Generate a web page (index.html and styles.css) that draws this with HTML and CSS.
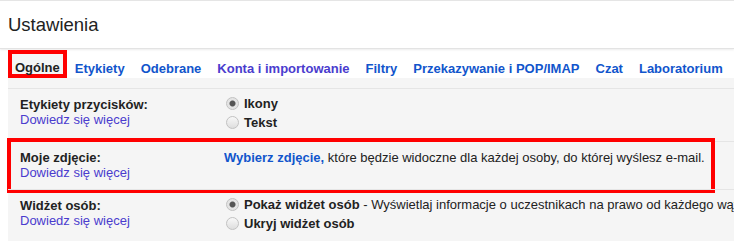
FILE: index.html
```html
<!DOCTYPE html>
<html>

<head>
    <title>Ustawienia</title>
    <link rel="stylesheet" href="styles.css">
</head>

<body>
    <div class="header">
        <h1>Ustawienia</h1>
    </div>

    <div class="tabs">
        <a class="tab selected">Ogólne</a>
        <a class="tab">Etykiety</a>
        <a class="tab">Odebrane</a>
        <a class="tab visited">Konta i importowanie</a>
        <a class="tab">Filtry</a>
        <a class="tab">Przekazywanie i POP/IMAP</a>
        <a class="tab">Czat</a>
        <a class="tab">Laboratorium</a>
    </div>

    <div class="panel">
        <div class="row">
            <div class="label">
                <b>Etykiety przycisków:</b><br>
                <a class="more">Dowiedz się więcej</a>
            </div>
            <div class="value options">
                <label class="option"><input type="radio" name="buttons" checked><b>Ikony</b></label>
                <label class="option"><input type="radio" name="buttons"><b>Tekst</b></label>
            </div>
        </div>

        <div class="row marked">
            <div class="label">
                <b>Moje zdjęcie:</b><br>
                <a class="more">Dowiedz się więcej</a>
            </div>
            <div class="value">
                <a class="action">Wybierz zdjęcie,</a> które będzie widoczne dla każdej osoby, do której wyślesz e-mail.
            </div>
        </div>

        <div class="row">
            <div class="label">
                <b>Widżet osób:</b><br>
                <a class="more">Dowiedz się więcej</a>
            </div>
            <div class="value options">
                <label class="option"><input type="radio" name="people" checked><b>Pokaż widżet osób</b>&nbsp;- Wyświetlaj informacje o uczestnikach na prawo od każdego wątku.</label>
                <label class="option"><input type="radio" name="people"><b>Ukryj widżet osób</b></label>
            </div>
        </div>
    </div>
</body>
</html>
```

FILE: styles.css
```css
body {
    margin: 0;
    font-family: "Liberation Sans", Arial, sans-serif;
    font-size: 13px;
    color: #222;
    background-color: #fff;
    overflow: hidden;
}

.header {
    border-top: 1px solid #e5e5e5;
    border-bottom: 1px solid #e3e3e3;
    box-shadow: 0 1px 2px rgba(0, 0, 0, 0.08);
}

h1 {
    margin: 0;
    padding-left: 8px;
    font-size: 18.5px;
    font-weight: normal;
    line-height: 47px;
    color: #222;
}

.tabs {
    display: flex;
    margin-top: 1px;
    padding-left: 8px;
    white-space: nowrap;
}

.tab {
    padding: 9px 8px 0;
    line-height: 19px;
    font-weight: bold;
    color: #15c;
}

.tab.visited {
    color: #4a3cce;
}

.tab.selected {
    padding: 7px 3px 0;
    line-height: 13px;
    border: 4px solid red;
    color: #222;
    background-color: #f5f5f5;
}

.panel {
    margin-left: 8px;
    padding-top: 10px;
    background-color: #f5f5f5;
}

.row {
    position: relative;
    display: grid;
    grid-template-columns: 204px 1fr;
    padding: 8px 0 9px 12px;
    border-top: 1px solid #e5e5e5;
    line-height: 15px;
    white-space: nowrap;
}

/* red annotation frame */
.row.marked::after {
    content: "";
    position: absolute;
    left: -1px;
    top: -4px;
    right: 19px;
    bottom: -4px;
    border: 4px solid red;
}

.more {
    color: #4a3cce;
}

.value {
    overflow: hidden;
}

.options {
    margin-top: -3px;
}

.option {
    display: flex;
    align-items: center;
    height: 19px;
}

.action {
    font-weight: bold;
    color: #15c;
}

input[type="radio"] {
    appearance: none;
    flex-shrink: 0;
    width: 13px;
    height: 13px;
    margin: 0 5px 0 2px;
    border: 1px solid #c2c2c2;
    border-radius: 50%;
    background: linear-gradient(#f8f8f8, #dedede);
}

input[type="radio"]:checked {
    background: radial-gradient(circle, #555 0 2.5px, #e4e4e4 3.5px);
}
```
